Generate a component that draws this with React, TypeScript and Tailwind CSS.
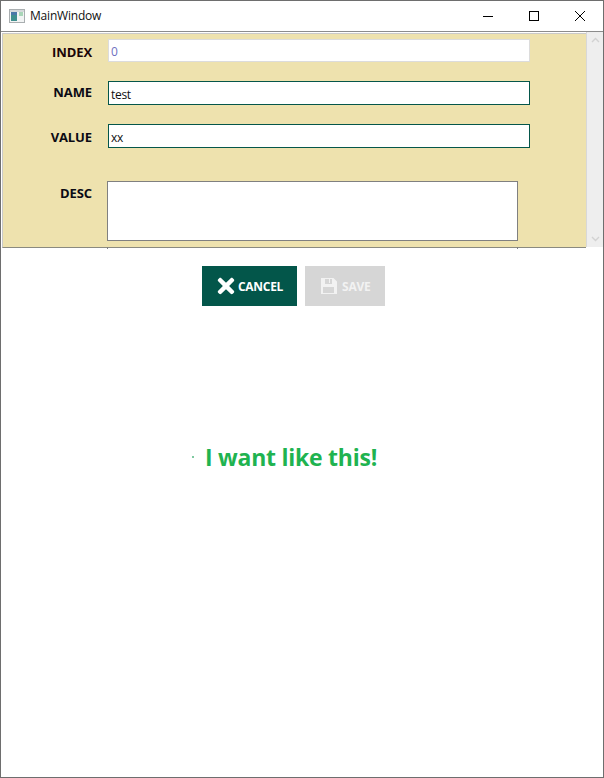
import { FaTimes } from "react-icons/fa";

const font = "font-['Open_Sans','Noto_Sans',sans-serif]";

function Row({ label, value, className, inputClass, labelClass }: { label: string; value: string; className: string; inputClass: string; labelClass: string }) {
  return (
    <div className={`flex items-start ${className}`}>
      <div className={`w-[89px] text-right text-[13px] font-bold leading-[20px] tracking-[-0.1px] text-[#0b0b14] ${labelClass}`}>{label}</div>
      <div className={`ml-[16px] w-[422px] flex items-center pl-[2px] text-[12px] leading-none tracking-[-0.3px] ${inputClass}`}>{value}</div>
    </div>
  );
}

export default function App() {
  return (
    <div className={`w-[604px] h-[778px] bg-white border border-[#6e6e6e] flex flex-col overflow-hidden ${font}`}>
      <div className="h-[30px] shrink-0 flex items-center">
        <svg width="16" height="16" viewBox="0 0 16 16" className="ml-[8px]">
          <rect x="0.5" y="1.5" width="15" height="13" fill="#f2f4f4" stroke="#a9aeb0" />
          <rect x="1" y="2" width="14" height="2" fill="#d5d9db" />
          <rect x="2" y="4" width="6" height="9" fill="#3f8f8e" />
          <rect x="2" y="4" width="6" height="3" fill="#4a78a8" />
          <rect x="10" y="4" width="4" height="4" fill="#a9d6b8" />
        </svg>
        <span className="ml-[5px] text-[12px] tracking-[-0.2px] text-[#111]">MainWindow</span>
        <div className="ml-auto flex">
          <div className="w-[46px] h-[30px] flex items-center justify-center">
            <svg width="10" height="10" viewBox="0 0 10 10"><path d="M0 5.5H10" stroke="#000" /></svg>
          </div>
          <div className="w-[46px] h-[30px] flex items-center justify-center">
            <svg width="10" height="10" viewBox="0 0 10 10"><rect x="0.5" y="0.5" width="9" height="9" fill="none" stroke="#000" /></svg>
          </div>
          <div className="w-[46px] h-[30px] flex items-center justify-center">
            <svg width="10" height="10" viewBox="0 0 10 10"><path d="M0 0L10 10M10 0L0 10" stroke="#000" /></svg>
          </div>
        </div>
      </div>
      <div className="h-[1px] shrink-0 bg-[#8c8c8c]" />
      <div className="h-[216px] shrink-0 flex pl-[1px] relative">
        <div className="w-[585px] h-[215px] mt-[1px] bg-[#eee2ae] border-l border-t border-[#c9c9c9] border-b-[1px] border-b-[#8a8a80] overflow-hidden">
          <Row label="INDEX" value="0" className="pt-[5px]" labelClass="pt-[3px] text-[#1a0508]" inputClass="h-[23px] pt-[2px] bg-white border border-[#dcdcdc] text-[#6f6fc0]" />
          <Row label="NAME" value="test" className="pt-[19px]" labelClass="pt-[1px]" inputClass="h-[24px] pt-[4px] bg-white border border-[#05564a] text-[#101010]" />
          <Row label="VALUE" value="xx" className="pt-[19px]" labelClass="pt-[3px]" inputClass="h-[24px] pt-[4px] bg-white border border-[#05564a] text-[#101010]" />
          <div className="flex items-start pt-[33px]">
            <div className="w-[89px] text-right text-[13px] font-bold leading-[20px] tracking-[-0.1px] text-[#0b0b14] pt-[2px]">DESC</div>
            <div className="ml-[15px] w-[411px] h-[60px] bg-white border border-[#808080]" />
          </div>
        </div>
        <div className="w-[17px] h-[215px] bg-[#eeeeee] border-l border-[#d8d8d8] flex flex-col items-center justify-between py-[5px]">
          <svg width="9" height="6" viewBox="0 0 9 6"><path d="M1 5L4.5 1.5L8 5" fill="none" stroke="#d2d2d2" strokeWidth="1.4" /></svg>
          <svg width="9" height="6" viewBox="0 0 9 6"><path d="M1 1L4.5 4.5L8 1" fill="none" stroke="#d2d2d2" strokeWidth="1.4" /></svg>
        </div>
        <div className="absolute left-[106px] top-[215px] w-[1px] h-[2px] bg-[#808080]" />
        <div className="absolute left-[516px] top-[215px] w-[1px] h-[2px] bg-[#808080]" />
      </div>
      <div className="flex pl-[201px] pt-[18px] gap-[8px]">
        <div className="w-[95px] h-[40px] bg-[#03564a] flex items-center pl-[12px] text-white text-[12px] font-bold">
          <FaTimes className="text-[24px] shrink-0" />
          <span className="pt-[1px] tracking-[-0.3px]">CANCEL</span>
        </div>
        <div className="w-[80px] h-[40px] bg-[#d6d6d6] flex items-center pl-[16px] gap-[5px] text-[#f2f2f2] text-[12px] font-bold">
          <svg width="16" height="16" viewBox="0 0 16 16" className="shrink-0">
            <path fillRule="evenodd" fill="#f2f2f2" d="M0 0H12.5L16 3.5V16H0ZM4 1V6H11V1H9V5H8V1ZM2 9V15H13V9Z" />
          </svg>
          <span className="pt-[1px] tracking-[-0.2px]">SAVE</span>
        </div>
      </div>
      <div className="flex items-center pl-[191px] pt-[134px]">
        <div className="w-[2px] h-[2px] bg-[#7fc9a0]" />
        <div className="ml-[11px] text-[23px] font-bold leading-[34px] tracking-[-0.25px] text-[#1fb350]">I want like this!</div>
      </div>
    </div>
  );
}
